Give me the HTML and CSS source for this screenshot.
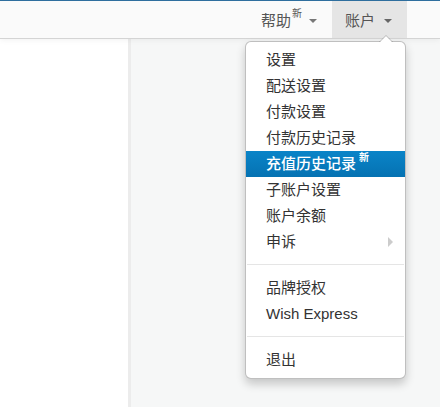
FILE: index.html
```html
<!DOCTYPE html>
<html>
<head>
<meta charset="utf-8">
<link rel="stylesheet" href="styles.css">
</head>
<body>
<div class="page">
  <header class="navbar">
    <ul class="nav">
      <li class="nav-item">
        <span class="nav-link">帮助<sup class="new">新</sup><span class="caret"></span></span>
      </li>
      <li class="nav-item active">
        <span class="nav-link">账户<span class="caret"></span></span>
        <ul class="dropdown-menu">
          <li><span class="menu-link">设置</span></li>
          <li><span class="menu-link">配送设置</span></li>
          <li><span class="menu-link">付款设置</span></li>
          <li><span class="menu-link">付款历史记录</span></li>
          <li><span class="menu-link hl">充值历史记录 <sup class="new-w">新</sup></span></li>
          <li><span class="menu-link">子账户设置</span></li>
          <li><span class="menu-link">账户余额</span></li>
          <li class="submenu"><span class="menu-link">申诉<span class="sub-caret"></span></span></li>
          <li class="divider"></li>
          <li><span class="menu-link">品牌授权</span></li>
          <li><span class="menu-link">Wish Express</span></li>
          <li class="divider"></li>
          <li><span class="menu-link">退出</span></li>
        </ul>
      </li>
    </ul>
  </header>
  <div class="main">
    <aside class="sidebar"></aside>
    <section class="content"></section>
  </div>
</div>
</body>
</html>
```

FILE: styles.css
```css
* { box-sizing: border-box; }
html, body { margin: 0; padding: 0; }
body {
  font-family: "Liberation Sans", "Noto Sans CJK SC", sans-serif;
  font-size: 15px;
  color: #333;
  background: #f6f7f7;
}
.page {
  width: 440px;
  height: 407px;
  display: flex;
  flex-direction: column;
  overflow: hidden;
}
.navbar {
  position: relative;
  z-index: 2;
  height: 39px;
  background: #fafafa;
  border-top: 1px solid #2e6e9e;
  border-bottom: 1px solid #d4d4d4;
  box-shadow: 0 1px 6px rgba(0,0,0,0.06);
  display: flex;
  justify-content: flex-end;
  padding-right: 33px;
  flex: none;
}
.nav {
  list-style: none;
  margin: 0;
  padding: 0;
  display: flex;
}
.nav-item {
  position: relative;
  height: 37px;
}
.nav-link {
  display: flex;
  align-items: center;
  height: 37px;
  padding: 0 15px 0 15px;
  font-size: 15px;
  color: #555;
  white-space: nowrap;
}
.nav-item.active .nav-link {
  background: #e5e5e5;
  padding-left: 13px;
}
.new {
  font-size: 10px;
  align-self: flex-start;
  margin-top: 8px;
  margin-left: 1px;
  line-height: 1;
}
.caret {
  display: inline-block;
  width: 0;
  height: 0;
  border-top: 4px solid #777;
  border-left: 4px solid transparent;
  border-right: 4px solid transparent;
  margin-left: 7px;
  margin-top: 2px;
}
.nav-item.active .caret { margin-left: 9px; border-top-color: #666; }
.dropdown-menu {
  position: absolute;
  top: 40px;
  right: 1px;
  width: 161px;
  list-style: none;
  margin: 0;
  padding: 5px 0;
  background: #fff;
  border: 1px solid rgba(0,0,0,0.25);
  border-radius: 6px;
  box-shadow: 0 5px 10px rgba(0,0,0,0.2);
}
.dropdown-menu::before {
  content: "";
  position: absolute;
  top: -7px;
  right: 12px;
  border-left: 7px solid transparent;
  border-right: 7px solid transparent;
  border-bottom: 7px solid rgba(0,0,0,0.2);
}
.dropdown-menu::after {
  content: "";
  position: absolute;
  top: -6px;
  right: 13px;
  border-left: 6px solid transparent;
  border-right: 6px solid transparent;
  border-bottom: 6px solid #fff;
}
.menu-link {
  display: flex;
  align-items: center;
  height: 26px;
  padding: 0 20px;
  line-height: 20px;
  color: #333;
  white-space: nowrap;
}
.menu-link.hl {
  color: #fff;
  font-weight: 500;
  background: linear-gradient(to bottom, #0a84c8, #0572b2);
}
.new-w {
  font-size: 10px;
  align-self: flex-start;
  margin-top: 2px;
  margin-left: 3px;
  line-height: 1;
  font-weight: bold;
}
.submenu .menu-link { justify-content: space-between; padding-right: 12px; }
.sub-caret {
  width: 0;
  height: 0;
  border-top: 5px solid transparent;
  border-bottom: 5px solid transparent;
  border-left: 5px solid #ccc;
}
.divider {
  height: 1px;
  margin: 9px 1px;
  background: #e5e5e5;
  border-bottom: 1px solid #fff;
  box-sizing: content-box;
}
.main {
  flex: 1;
  display: flex;
}
.sidebar {
  width: 131px;
  background: #fff;
  border-right: 3px solid #ececec;
}
.content {
  flex: 1;
  background: #f6f7f7;
}
```
